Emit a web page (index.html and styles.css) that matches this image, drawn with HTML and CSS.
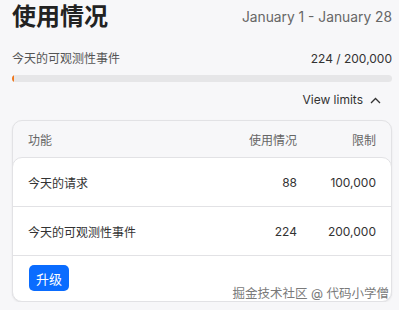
FILE: index.html
```html
<!DOCTYPE html>
<html lang="zh">
<head>
    <meta charset="UTF-8">
    <meta name="viewport" content="width=device-width, initial-scale=1.0">
    <title>使用情况</title>
    <link rel="stylesheet" href="styles.css">
</head>
<body>
    <div class="page">
        <div class="header">
            <h1>使用情况</h1>
            <span class="period">January 1 - January 28</span>
        </div>

        <div class="usage-row">
            <span class="usage-label">今天的可观测性事件</span>
            <span class="usage-count">224 / 200,000</span>
        </div>
        <div class="bar"><div class="bar-fill" style="width: 0.4%;"></div></div>

        <div class="toggle">
            <span>View limits</span>
            <svg width="11" height="7" viewBox="0 0 11 7"><path d="M1 6 L5.5 1.5 L10 6" fill="none" stroke="#333" stroke-width="1.3"/></svg>
        </div>

        <div class="card">
            <div class="grid card-head">
                <span>功能</span>
                <span class="num">使用情况</span>
                <span class="num">限制</span>
            </div>
            <div class="card-body">
                <div class="grid row">
                    <span>今天的请求</span>
                    <span class="num">88</span>
                    <span class="num">100,000</span>
                </div>
                <div class="grid row">
                    <span>今天的可观测性事件</span>
                    <span class="num">224</span>
                    <span class="num">200,000</span>
                </div>
                <div class="card-foot">
                    <button>升级</button>
                </div>
            </div>
        </div>
    </div>
    <div class="watermark">掘金技术社区 @ 代码小学僧</div>
</body>
</html>
```

FILE: styles.css
```css
body {
    margin: 0;
    background: #f7f7f9;
    font-family: Inter, "Noto Sans CJK SC", sans-serif;
    color: #333;
}

.page {
    padding: 0 7px 0 12px;
}

.header {
    display: flex;
    justify-content: space-between;
    align-items: center;
    height: 34px;
}

.header h1 {
    margin: 0;
    font-size: 24px;
    font-weight: 700;
    color: #222;
    line-height: 34px;
}

.period {
    font-size: 13.8px;
    color: #666;
}

.usage-row {
    display: flex;
    justify-content: space-between;
    align-items: center;
    margin-top: 16px;
    line-height: 18px;
}

.usage-label {
    font-size: 12px;
    color: #555;
}

.usage-count {
    font-size: 12px;
    color: #333;
}

.bar {
    margin-top: 7px;
    height: 7px;
    background: #e6e6e8;
    border-radius: 4px;
    overflow: hidden;
}

.bar-fill {
    height: 100%;
    min-width: 2px;
    background: #f0781e;
}

.toggle {
    display: flex;
    justify-content: flex-end;
    align-items: center;
    gap: 7px;
    margin-top: 9px;
    padding-right: 11px;
    font-size: 12px;
    line-height: 18px;
    color: #333;
}

.card {
    margin-top: 11px;
    border: 1px solid #e2e2e5;
    border-radius: 10px;
    background: #f7f7f9;
    box-shadow: 0 1px 2px rgba(0, 0, 0, 0.08);
}

.grid {
    display: grid;
    grid-template-columns: 1fr 80px 79px;
    padding: 0 15px;
    align-items: center;
    font-size: 12px;
}

.num {
    text-align: right;
}

.card-head {
    height: 36px;
    color: #666;
}

.card-body {
    margin: 0 -1px -1px;
    background: #fff;
    border: 1px solid #e2e2e5;
    border-radius: 10px;
}

.row {
    height: 48px;
    border-bottom: 1px solid #e2e2e5;
    color: #333;
}

.card-foot {
    padding: 9px 16px 10px;
}

.card-foot button {
    width: 40px;
    height: 26px;
    border: none;
    border-radius: 5px;
    background: #0a6cff;
    color: #fff;
    font-family: inherit;
    font-size: 13px;
    cursor: pointer;
}

.watermark {
    position: absolute;
    right: 10px;
    top: 285px;
    font-size: 12.5px;
    line-height: 18px;
    color: #7a7a7a;
}
```
